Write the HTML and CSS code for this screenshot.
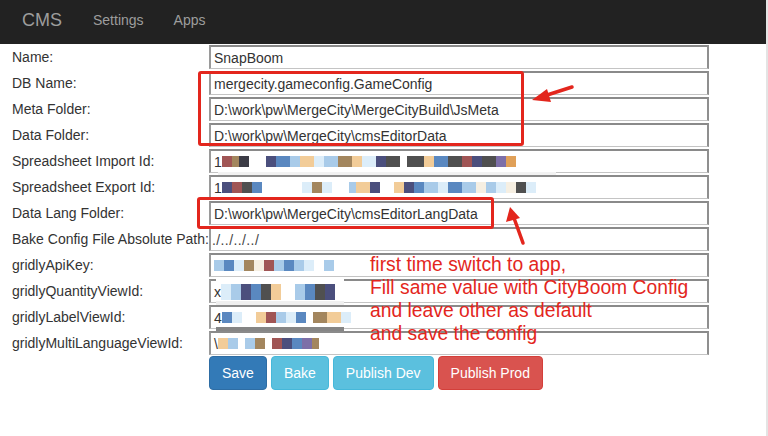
FILE: index.html
```html
<!DOCTYPE html>
<html>
<head>
<meta charset="utf-8">
<link rel="stylesheet" href="styles.css">
</head>
<body>
<div class="page">
  <nav class="navbar">
    <span class="brand">CMS</span>
    <a class="nav-link">Settings</a>
    <a class="nav-link">Apps</a>
  </nav>
  <main class="content">
    <div class="form">
      <label>Name:</label><div class="field">SnapBoom</div>
      <label>DB Name:</label><div class="field">mergecity.gameconfig.GameConfig</div>
      <label>Meta Folder:</label><div class="field">D:\work\pw\MergeCity\MergeCityBuild\JsMeta</div>
      <label>Data Folder:</label><div class="field">D:\work\pw\MergeCity\cmsEditorData</div>
      <label>Spreadsheet Import Id:</label>
      <div class="field mosaic">1<span class="m w6 c2"></span><span class="m w4 c5"></span><span class="m w6 c12"></span><span class="sp w10"></span><span class="m w6 c1"></span><span class="m w8 c4"></span><span class="m w6 c7"></span><span class="m w8 c8"></span><span class="m w6 c6"></span><span class="m w8 c7"></span><span class="m w8 c5"></span><span class="m w6 c8"></span><span class="m w8 c6"></span><span class="m w6 c1"></span><span class="m w8 c3"></span><span class="sp w4"></span><span class="m w10 c3"></span><span class="m w6 c8"></span><span class="m w8 c4"></span><span class="m w8 c3"></span><span class="m w6 c2"></span><span class="m w6 c1"></span><span class="m w8 c3"></span><span class="m w6 c9"></span><span class="m w6 c10"></span><span class="strip"></span></div>
      <label>Spreadsheet Export Id:</label>
      <div class="field mosaic">1<span class="m w6 c1"></span><span class="m w6 c2"></span><span class="m w6 c3"></span><span class="m w6 c4"></span><span class="sp w24"></span><span class="m w6 c6"></span><span class="m w6 c5"></span><span class="m w6 c6"></span><span class="sp w10"></span><span class="m w4 c7"></span><span class="m w8 c8"></span><span class="m w6 c1"></span><span class="sp w8"></span><span class="m w6 c8"></span><span class="m w6 c1"></span><span class="m w6 c4"></span><span class="m w8 c7"></span><span class="m w6 c6"></span><span class="m w8 c4"></span><span class="m w8 c7"></span><span class="m w6 c11"></span><span class="m w6 c7"></span><span class="m w6 c6"></span><span class="m w6 c11"></span><span class="m w6 c3"></span><span class="m w6 c6"></span></div>
      <label>Data Lang Folder:</label><div class="field">D:\work\pw\MergeCity\cmsEditorLangData</div>
      <label>Bake Config File Absolute Path:</label><div class="field tight">./../../../</div>
      <label>gridlyApiKey:</label>
      <div class="field mosaic"><span class="m w6 c7"></span><span class="m w6 c4"></span><span class="m w6 c6"></span><span class="m w6 c5"></span><span class="m w6 c11"></span><span class="m w6 c2"></span><span class="m w6 c7"></span><span class="m w6 c4"></span><span class="m w6 c7"></span><span class="m w6 c6"></span><span class="sp w6"></span><span class="m w6 c7"></span></div>
      <label>gridlyQuantityViewId:</label>
      <div class="field mosaic">x<span class="m tall w6 c6"></span><span class="m tall w6 c7"></span><span class="m tall w6 c1"></span><span class="m tall w6 c4"></span><span class="m tall w6 c3"></span><span class="m tall w6 c8"></span><span class="sp w8"></span><span class="m tall w6 c7"></span><span class="m tall w6 c4"></span><span class="m tall w6 c3"></span><span class="m tall w6 c1"></span><span class="cover"></span><span class="lstrip"></span></div>
      <label>gridlyLabelViewId:</label>
      <div class="field mosaic">4<span class="m w6 c4"></span><span class="m w6 c6"></span><span class="sp w8"></span><span class="m w6 c8"></span><span class="m w6 c2"></span><span class="m w6 c7"></span><span class="m w6 c6"></span><span class="m w6 c4"></span><span class="sp w4"></span><span class="m w8 c5"></span><span class="m w8 c8"></span><span class="m w6 c6"></span><span class="dbar"></span></div>
      <label>gridlyMultiLanguageViewId:</label>
      <div class="field mosaic">\<span class="m w6 c8"></span><span class="m w6 c7"></span><span class="sp w4"></span><span class="m w6 c7"></span><span class="m w6 c5"></span><span class="sp w4"></span><span class="m w6 c2"></span><span class="m w6 c1"></span><span class="m w6 c4"></span><span class="m w6 c9"></span><span class="m w4 c5"></span></div>
    </div>
    <div class="actions">
      <button class="btn btn-primary">Save</button>
      <button class="btn btn-info">Bake</button>
      <button class="btn btn-info">Publish Dev</button>
      <button class="btn btn-danger">Publish Prod</button>
    </div>
  </main>

  <div class="mark mark-1"></div>
  <div class="mark mark-2"></div>
  <svg class="arrows" width="768" height="436" viewBox="0 0 768 436">
    <line x1="572" y1="87" x2="544" y2="96" stroke="#e3261d" stroke-width="3.5" stroke-linecap="round"/>
    <polygon points="532,100 547,89 551,102" fill="#e3261d"/>
    <line x1="523" y1="243" x2="514" y2="218" stroke="#e3261d" stroke-width="3.5" stroke-linecap="round"/>
    <polygon points="510,207 506,222 520,218" fill="#e3261d"/>
  </svg>
  <div class="note">
    <p>first time switch to app,</p>
    <p>Fill same value with CityBoom Config</p>
    <p>and leave other as default</p>
    <p>and save the config</p>
  </div>
</div>
</body>
</html>
```

FILE: styles.css
```css
html, body {
  margin: 0;
  padding: 0;
  background: #fff;
}
body {
  font-family: "Liberation Sans", Arial, sans-serif;
  font-size: 14px;
  color: #333;
}
.page {
  position: relative;
  width: 766px;
  height: 436px;
  border-right: 2px solid #e4e4e4;
  overflow: hidden;
}
.navbar {
  height: 44px;
  background: #222;
  display: flex;
  align-items: center;
  padding-left: 22px;
  padding-bottom: 4px;
  box-sizing: border-box;
}
.brand {
  font-size: 18px;
  color: #9d9d9d;
  margin-right: 31px;
}
.nav-link {
  font-size: 14px;
  color: #9d9d9d;
  margin-right: 30px;
}
.content {
  padding-left: 12px;
  padding-top: 1px;
}
.form {
  display: grid;
  grid-template-columns: 197px 500px;
  grid-auto-rows: 24px;
  row-gap: 2px;
}
.form label {
  display: flex;
  align-items: center;
  white-space: nowrap;
  color: #333;
}
.field {
  position: relative;
  box-sizing: border-box;
  height: 24px;
  border-style: solid;
  border-width: 2px 2px 1px 2px;
  border-color: #8a8a8a #8f8f8f #c4c4c4 #9a9a9a;
  padding: 0 3px;
  display: flex;
  align-items: center;
  white-space: nowrap;
  color: #333;
}
.field.tight {
  padding-left: 1px;
  color: #444;
  letter-spacing: 0.4px;
}
.mosaic .m {
  display: inline-block;
  height: 11px;
}
.mosaic .m.tall {
  height: 16px;
}
.mosaic .sp { display: inline-block; }
.w4 { width: 7px; }
.w6 { width: 10px; }
.w8 { width: 14px; }
.w10 { width: 17px; }
.w24 { width: 40px; }
.c1 { background: #4b4f7d; }
.c2 { background: #a05555; }
.c3 { background: #505050; }
.c4 { background: #5a88c0; }
.c5 { background: #a3865e; }
.c6 { background: #dcedf9; }
.c7 { background: #a9cbe9; }
.c8 { background: #f2cc98; }
.c9 { background: #7d6fa8; }
.c10 { background: #e0a058; }
.c11 { background: #f6efe2; }
.c12 { background: #3c3c46; }
.strip {
  position: absolute;
  left: 7px;
  width: 338px;
  bottom: -4px;
  height: 4px;
  background: #f2f2f2;
}
.cover {
  position: absolute;
  left: 5px;
  width: 128px;
  top: -4px;
  height: 5px;
  background: #fff;
}
.lstrip {
  position: absolute;
  left: 5px;
  width: 128px;
  bottom: -3px;
  height: 4px;
  background: #efefef;
}
.dbar {
  position: absolute;
  left: 5px;
  width: 128px;
  bottom: -4px;
  height: 5px;
  background: #858585;
}
.actions {
  display: flex;
  gap: 4px;
  padding-left: 197px;
  margin-top: 1px;
}
.btn {
  font-family: "Liberation Sans", Arial, sans-serif;
  font-size: 14px;
  line-height: 20px;
  padding: 6px 12px;
  border: 1px solid transparent;
  border-radius: 4px;
  color: #fff;
}
.btn-primary { background: #337ab7; border-color: #2e6da4; }
.btn-info { background: #5bc0de; border-color: #46b8da; }
.btn-danger { background: #d9534f; border-color: #d43f3a; }
.mark {
  position: absolute;
  border: 3px solid #e3261d;
  border-radius: 3px;
  box-sizing: border-box;
}
.mark-1 { left: 198px; top: 71px; width: 326px; height: 75px; }
.mark-2 { left: 197px; top: 197px; width: 297px; height: 32px; }
.arrows {
  position: absolute;
  left: 0;
  top: 0;
  pointer-events: none;
}
.note {
  position: absolute;
  left: 370px;
  top: 253px;
  color: #e3261d;
  font-size: 19.3px;
  line-height: 23px;
}
.note p { margin: 0; }
```
